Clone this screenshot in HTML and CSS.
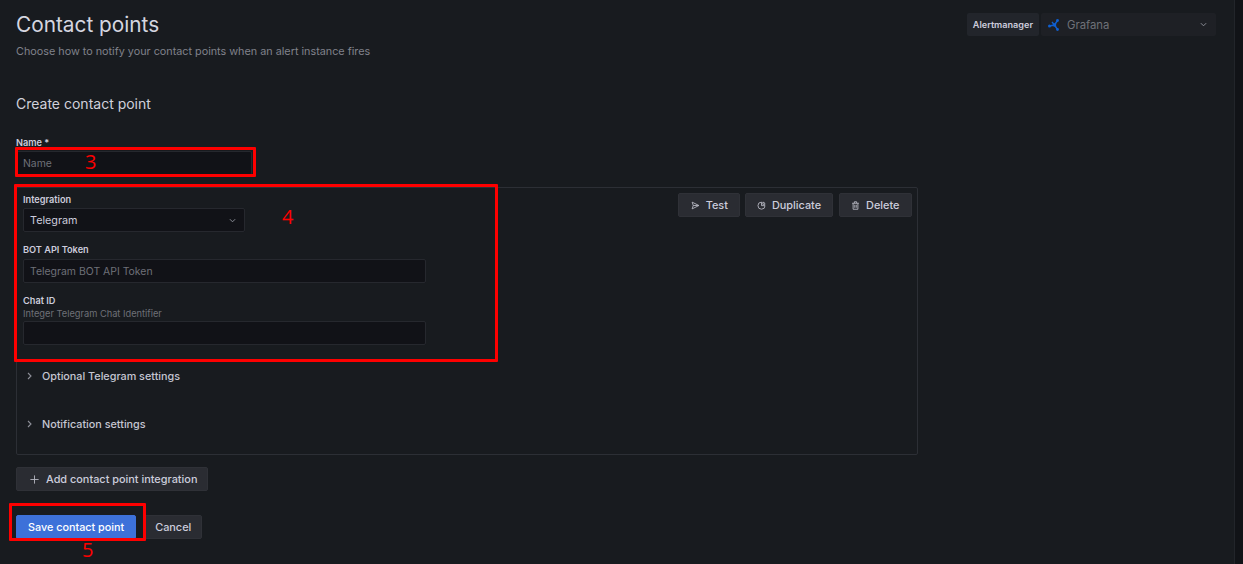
FILE: index.html
```html
<!DOCTYPE html>
<html lang="en">
<head>
    <meta charset="UTF-8">
    <title>Contact points</title>
    <link rel="stylesheet" href="styles.css">
</head>
<body>
    <div class="page">
        <div class="page-header">
            <div>
                <h1>Contact points</h1>
                <p class="subtitle">Choose how to notify your contact points when an alert instance fires</p>
            </div>
            <div class="am-picker">
                <span class="am-label">Alertmanager</span>
                <div class="am-select">
                    <svg class="am-logo" viewBox="0 0 12 12" width="12" height="12">
                        <path d="M1.5 7 L6.5 6 L9.5 1.5 M6.5 6 L9.5 10.5 M6.5 6 L4 3" stroke="#0f5fd0" stroke-width="1.4" fill="none"/>
                        <circle cx="1.5" cy="7" r="1.5" fill="#0f5fd0"/>
                        <circle cx="6.5" cy="6" r="1.8" fill="#0f5fd0"/>
                        <circle cx="9.5" cy="1.5" r="1.4" fill="#0f5fd0"/>
                        <circle cx="9.5" cy="10.5" r="1.4" fill="#0f5fd0"/>
                    </svg>
                    <span class="am-value">Grafana</span>
                    <svg class="chevron" viewBox="0 0 8 5" width="7" height="5"><path d="M1 1 L4 4 L7 1" /></svg>
                </div>
            </div>
        </div>

        <h2>Create contact point</h2>

        <label class="field-label name-label">Name *</label>
        <div class="input name-input"><span class="placeholder">Name</span></div>

        <div class="integration">
            <div class="integration-actions">
                <button class="btn">
                    <svg viewBox="0 0 12 12" width="9" height="9"><path d="M1.5 1.5 L10.5 6 L1.5 10.5 L3 6 Z M3 6 H10.5" /></svg>
                    Test
                </button>
                <button class="btn btn-duplicate">
                    <svg viewBox="0 0 12 12" width="9" height="9"><path d="M6 1.5 A4.7 4.7 0 1 0 10.7 6.2 H6 Z M7.8 1.5 A3 3 0 0 1 10.7 4.4 H7.8 Z" /></svg>
                    Duplicate
                </button>
                <button class="btn">
                    <svg viewBox="0 0 12 12" width="9" height="9"><path d="M1.5 3 H10.5 M4.5 3 V1 H7.5 V3 M2.8 3 V11 H9.2 V3 M5 5 V9 M7 5 V9" /></svg>
                    Delete
                </button>
            </div>

            <label class="field-label">Integration</label>
            <div class="input select-input">
                <span>Telegram</span>
                <svg class="chevron" viewBox="0 0 8 5" width="7" height="5"><path d="M1 1 L4 4 L7 1" /></svg>
            </div>

            <label class="field-label token-label">BOT API Token</label>
            <div class="input wide-input"><span class="placeholder">Telegram BOT API Token</span></div>

            <label class="field-label chat-label">Chat ID</label>
            <div class="field-desc">Integer Telegram Chat Identifier</div>
            <div class="input wide-input"></div>

            <div class="collapse optional-row">
                <svg class="caret" viewBox="0 0 5 8" width="5" height="8"><path d="M1 1 L4 4 L1 7" /></svg>
                <span>Optional Telegram settings</span>
            </div>
            <div class="collapse notif-row">
                <svg class="caret" viewBox="0 0 5 8" width="5" height="8"><path d="M1 1 L4 4 L1 7" /></svg>
                <span>Notification settings</span>
            </div>
        </div>

        <button class="btn add-btn">
            <svg viewBox="0 0 12 12" width="9" height="9"><path d="M6 0.5 V11.5 M0.5 6 H11.5" /></svg>
            Add contact point integration
        </button>

        <div class="form-actions">
            <button class="btn primary">Save contact point</button>
            <button class="btn">Cancel</button>
        </div>
    </div>

    <div class="scroll-strip"></div>

    <!-- red annotations drawn over the screenshot -->
    <div class="mark mark-name"></div>
    <div class="mark mark-integration"></div>
    <div class="mark mark-save"></div>
    <span class="mark-num num-3">3</span>
    <span class="mark-num num-4">4</span>
    <span class="mark-num num-5">5</span>
</body>
</html>
```

FILE: styles.css
```css
html, body {
    margin: 0;
    height: 564px;
    overflow: hidden;
}
body {
    background-color: #181b1f;
    color: #ccccdc;
    font-family: Inter, 'Liberation Sans', sans-serif;
    font-size: 12px;
    position: relative;
}
.page {
    padding: 0 27px 0 16px;
}
.page-header {
    display: flex;
    justify-content: space-between;
    padding-top: 12px;
}
h1 {
    margin: 0;
    font-size: 20.8px;
    font-weight: 400;
    line-height: 26px;
    color: #d5d6e0;
}
.subtitle {
    margin: 7px 0 0;
    font-size: 10.8px;
    line-height: 14px;
    color: #80828b;
}
.am-picker {
    display: flex;
    gap: 2px;
    height: 23px;
    margin-top: 1px;
}
.am-label {
    display: flex;
    align-items: center;
    padding: 0 6px;
    background-color: #22252b;
    border-radius: 2px;
    font-size: 9.1px;
    font-weight: 600;
    color: #ccccdc;
}
.am-select {
    display: flex;
    align-items: center;
    width: 175px;
    box-sizing: border-box;
    padding: 0 9px 0 7px;
    background-color: #1e2025;
    border-radius: 2px;
}
.am-logo {
    margin-right: 7px;
}
.am-value {
    flex: 1;
    font-size: 11.3px;
    color: #6f7178;
}
.chevron path, .caret path {
    fill: none;
    stroke: #8e9099;
    stroke-width: 1.1;
}
h2 {
    margin: 36px 0 0;
    font-size: 14px;
    font-weight: 400;
    line-height: 18px;
    color: #d0d1db;
}
.field-label {
    display: block;
    font-size: 9.2px;
    font-weight: 600;
    line-height: 12px;
    color: #ccccdc;
}
.name-label {
    margin-top: 24px;
}
.input {
    display: flex;
    align-items: center;
    box-sizing: border-box;
    height: 24px;
    margin-top: 3px;
    padding: 0 6px;
    background-color: #111217;
    border: 1px solid #26282e;
    border-radius: 2px;
    font-size: 10.8px;
}
.placeholder {
    font-size: 10.45px;
    color: #6e7077;
}
.name-input {
    width: 236px;
    margin-top: 2px;
}
.select-input {
    width: 222px;
    margin-top: 2px;
    padding-right: 8px;
    justify-content: space-between;
    color: #ccccdc;
}
.wide-input {
    width: 403px;
}
.integration {
    position: relative;
    width: 902px;
    height: 268px;
    box-sizing: border-box;
    margin-top: 12px;
    padding: 6px 6px 0;
    border: 1px solid #2c2f35;
    border-radius: 2px;
}
.integration-actions {
    position: absolute;
    top: 5px;
    right: 5px;
    display: flex;
    gap: 5px;
}
.btn {
    display: inline-flex;
    align-items: center;
    gap: 6px;
    height: 24px;
    padding: 0 11.5px;
    background-color: #2a2c32;
    border: 1px solid #2f3137;
    border-radius: 2px;
    color: #ccccdc;
    font-family: inherit;
    font-size: 10.9px;
    font-weight: 500;
}
.btn svg path {
    fill: none;
    stroke: #b4b5c0;
    stroke-width: 1.2;
}
.btn-duplicate {
    padding: 0 10.5px;
    margin-right: 1px;
}
.token-label {
    margin-top: 12px;
}
.chat-label {
    margin-top: 12px;
}
.field-desc {
    margin-top: 1px;
    font-size: 9.27px;
    line-height: 12px;
    color: #6e7077;
}
.field-desc + .input {
    margin-top: 1px;
}
.collapse {
    display: flex;
    align-items: center;
    gap: 10px;
    padding-left: 4px;
    height: 14px;
    font-size: 10.8px;
    font-weight: 500;
    color: #c5c6d2;
}
.optional-row {
    margin-top: 24px;
}
.notif-row {
    margin-top: 34px;
}
.add-btn {
    display: flex;
    margin-top: 12px;
    gap: 7px;
    padding: 0 10px 0 13px;
}
.form-actions {
    display: flex;
    gap: 8px;
    margin-top: 24px;
}
.form-actions .btn {
    padding: 0 10px;
}
.form-actions .primary {
    padding: 0 11px;
    background-color: #3d71d9;
    border-color: #3d71d9;
    color: #ffffff;
    font-size: 10.8px;
}
.scroll-strip {
    position: absolute;
    top: 0;
    right: 0;
    bottom: 0;
    width: 9px;
    background-color: #111317;
    border-left: 1px solid #22252a;
    box-sizing: border-box;
}
.mark {
    position: absolute;
    box-sizing: border-box;
    border: 3px solid #fe0000;
    border-radius: 1px;
}
.mark-name {
    left: 15px;
    top: 147px;
    width: 241px;
    height: 30px;
}
.mark-integration {
    left: 14px;
    top: 184px;
    width: 484px;
    height: 178px;
}
.mark-save {
    left: 9px;
    top: 503px;
    width: 137px;
    height: 38px;
}
.mark-num {
    position: absolute;
    font-family: 'Open Sans', sans-serif;
    font-size: 20px;
    line-height: 24px;
    color: #fe0000;
}
.num-3 { left: 85px; top: 150px; }
.num-4 { left: 282px; top: 205px; }
.num-5 { left: 82px; top: 538px; }
```
